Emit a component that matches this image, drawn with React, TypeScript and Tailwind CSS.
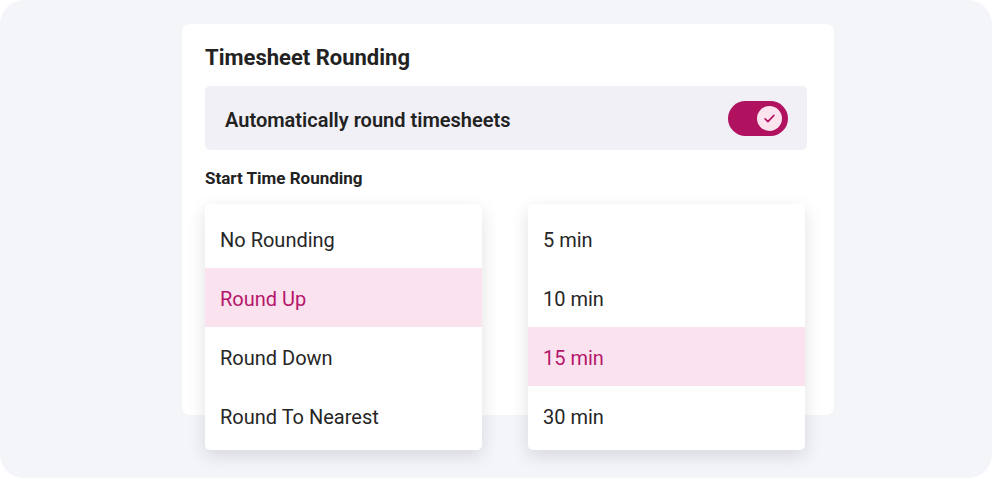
const startOptions = ["No Rounding", "Round Up", "Round Down", "Round To Nearest"];
const intervalOptions = ["5 min", "10 min", "15 min", "30 min"];

function OptionList({ options, selected }: { options: string[]; selected: string }) {
  return (
    <ul className="w-[277px] rounded-[5px] bg-white py-[5px] shadow-[0_6px_18px_rgba(20,20,40,0.13)]">
      {options.map((option) => {
        const active = option === selected;
        return (
          <li
            key={option}
            className={
              active
                ? "flex h-[59px] items-center bg-[#fae2ee] px-[15px] pt-[2px] text-[20px] text-[#b5166b]"
                : "flex h-[59px] items-center px-[15px] pt-[2px] text-[20px] text-[#262626]"
            }
          >
            {option}
          </li>
        );
      })}
    </ul>
  );
}

function Toggle() {
  return (
    <div className="flex h-[35px] w-[60px] items-center justify-end rounded-full bg-[#b0125f] pr-[6px]">
      <span className="flex h-[25px] w-[25px] items-center justify-center rounded-full bg-[#fce4ef]">
        <svg width="15" height="15" viewBox="0 0 24 24" fill="none" stroke="#b0125f" strokeWidth="2.6" strokeLinecap="round" strokeLinejoin="round">
          <path d="M5 12.5l4.5 4.5L19 7" />
        </svg>
      </span>
    </div>
  );
}

export default function App() {
  return (
    <div className="h-[478px] w-[992px] bg-white font-['Roboto','Liberation_Sans',sans-serif]">
      <div className="flex h-full w-full rounded-[24px] bg-[#f4f5f9] pl-[182px] pt-[24px]">
        <div className="h-[391px] w-[652px] rounded-[8px] bg-white pl-[23px] pr-[27px] pt-[19px]">
          <h1 className="text-[22px] font-bold leading-[30px] text-[#222222]">Timesheet Rounding</h1>
          <div className="mt-[13px] flex h-[64px] items-center justify-between rounded-[5px] bg-[#f1f0f6] pl-[20px] pr-[19px]">
            <span className="pt-[3px] text-[20px] font-semibold text-[#222222]">Automatically round timesheets</span>
            <Toggle />
          </div>
          <p className="mt-[16px] text-[17px] font-bold leading-[24px] text-[#222222]">Start Time Rounding</p>
          <div className="mt-[14px] flex gap-[46px]">
            <OptionList options={startOptions} selected="Round Up" />
            <OptionList options={intervalOptions} selected="15 min" />
          </div>
        </div>
      </div>
    </div>
  );
}
